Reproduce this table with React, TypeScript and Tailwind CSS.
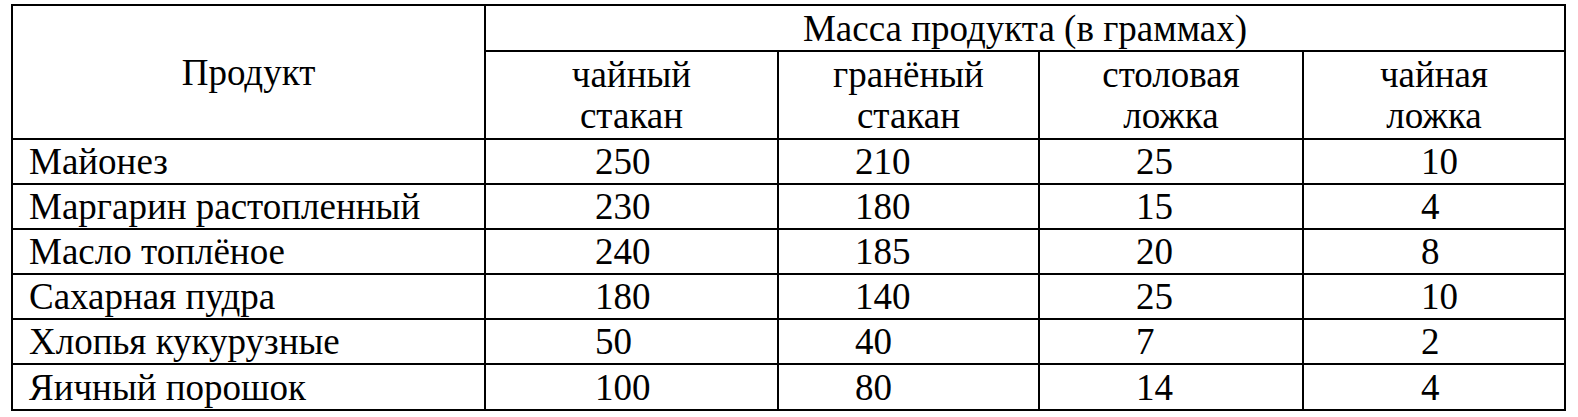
import React from "react";

const data: string[][] = [
  ["Майонез", "250", "210", "25", "10"],
  ["Маргарин растопленный", "230", "180", "15", "4"],
  ["Масло топлёное", "240", "185", "20", "8"],
  ["Сахарная пудра", "180", "140", "25", "10"],
  ["Хлопья кукурузные", "50", "40", "7", "2"],
  ["Яичный порошок", "100", "80", "14", "4"],
];

const pads = ["pl-[109px]", "pl-[76px]", "pl-[96px]", "pl-[117px]"];

const heads = [
  ["чайный", "стакан"],
  ["гранёный", "стакан"],
  ["столовая", "ложка"],
  ["чайная", "ложка"],
];

export default function App() {
  return (
    <div className="w-[1578px] h-[417px] overflow-hidden bg-white pt-[4px] pl-[11px]">
      <table className="w-[1555px] table-fixed border-collapse text-black text-[37px] leading-[41px] font-['Liberation_Serif','DejaVu_Serif',serif]">
        <colgroup>
          <col className="w-[473px]" />
          <col className="w-[293px]" />
          <col className="w-[261px]" />
          <col className="w-[264px]" />
          <col className="w-[262px]" />
        </colgroup>
        <thead>
          <tr className="h-[46px]">
            <th rowSpan={2} className="border-2 border-black p-0 font-normal text-center align-middle">
              <span className="font-['Liberation_Serif','DejaVu_Serif',serif]">Продукт</span>
            </th>
            <th colSpan={4} className="border-2 border-black p-0 font-normal text-center align-middle">
              <span className="font-['Liberation_Serif','DejaVu_Serif',serif]">Масса продукта (в граммах)</span>
            </th>
          </tr>
          <tr className="h-[88px]">
            {heads.map((h) => (
              <th key={h[0]} className="border-2 border-black p-0 font-normal text-center align-middle">
                <span className="font-['Liberation_Serif','DejaVu_Serif',serif]">
                  {h[0]}
                  <br />
                  {h[1]}
                </span>
              </th>
            ))}
          </tr>
        </thead>
        <tbody>
          {data.map((r, ri) => (
            <tr key={r[0]} className={ri === data.length - 1 ? "h-[46px]" : "h-[45px]"}>
              <td className="border-2 border-black p-0 pl-[16px] text-left align-middle whitespace-nowrap">
                <span className="font-['Liberation_Serif','DejaVu_Serif',serif]">{r[0]}</span>
              </td>
              {r.slice(1).map((v, i) => (
                <td key={i} className={`border-2 border-black p-0 text-left align-middle ${pads[i]}`}>
                  <span className="font-['Liberation_Serif','DejaVu_Serif',serif]">{v}</span>
                </td>
              ))}
            </tr>
          ))}
        </tbody>
      </table>
    </div>
  );
}
